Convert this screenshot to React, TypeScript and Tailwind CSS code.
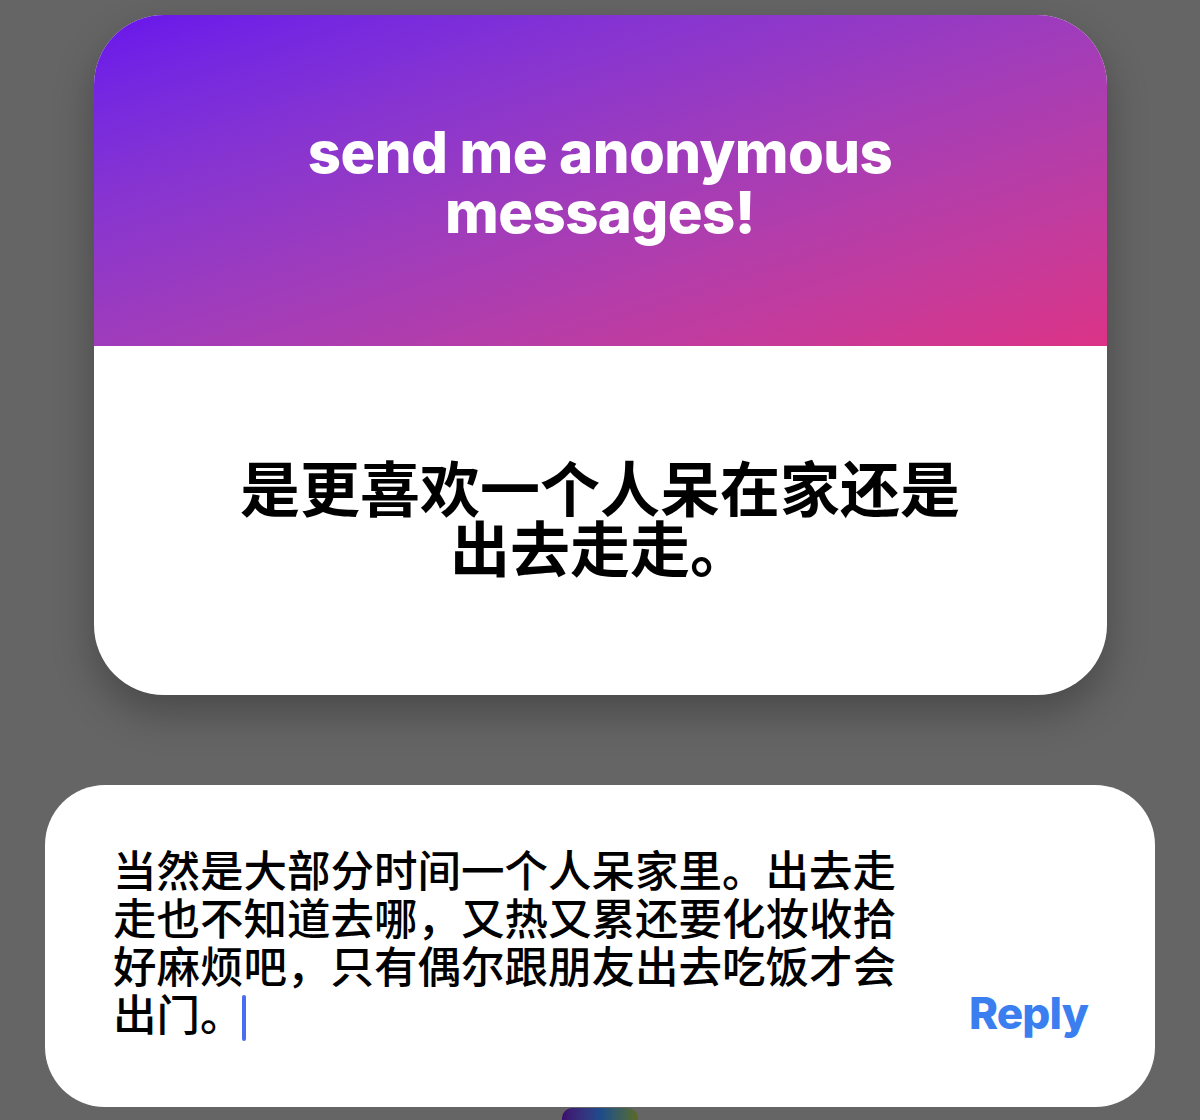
export default function App() {
  return (
    <div className="flex h-[1120px] w-full flex-col items-center overflow-hidden bg-[#656565] pt-[15px]">
      {/* Question card */}
      <div className="w-[1013px] shrink-0 overflow-hidden rounded-[70px] bg-white shadow-[0_18px_40px_rgba(0,0,0,0.28)]">
        <div className="flex h-[331px] items-center justify-center bg-linear-to-br from-[#6912ec] to-[#db3286] pt-[2px]">
          <h1 className="text-center font-['Inter','Liberation_Sans',sans-serif] text-[58px] leading-[60px] font-extrabold tracking-[-0.01em] text-white">
            <span className="block">send me anonymous</span>
            <span className="block">messages!</span>
          </h1>
        </div>
        <div className="flex h-[349px] items-center justify-center pb-[10px]">
          <p className="max-w-[760px] text-center font-['Noto_Sans_CJK_SC',sans-serif] text-[60px] leading-[60px] font-bold text-black">
            是更喜欢一个人呆在家还是出去走走。
          </p>
        </div>
      </div>

      {/* Reply card */}
      <div className="mt-[90px] flex h-[322px] w-[1110px] shrink-0 items-end rounded-[60px] bg-white pr-[67px] pb-[70px] pl-[68px]">
        <p className="w-[800px] font-['Noto_Sans_CJK_SC',sans-serif] text-[43.5px] leading-[48px] font-medium text-black">
          当然是大部分时间一个人呆家里。出去走走也不知道去哪，又热又累还要化妆收拾好麻烦吧，只有偶尔跟朋友出去吃饭才会出门。
          <span className="ml-[-2px] inline-block h-[46px] w-[4px] translate-y-[6px] rounded-full bg-[#4a6cf0] align-top" />
        </p>
        <span className="ml-auto font-['Inter','Liberation_Sans',sans-serif] text-[44px] leading-[48px] font-extrabold tracking-[-0.02em] text-[#3a7ef0]">
          Reply
        </span>
      </div>

      {/* colour wheel peeking below */}
      <div className="mt-[1px] h-[40px] w-[76px] shrink-0 rounded-t-[10px] bg-linear-to-r from-[#3d0c6e] via-[#1d4a8a] to-[#5a6a1a]" />
    </div>
  );
}
